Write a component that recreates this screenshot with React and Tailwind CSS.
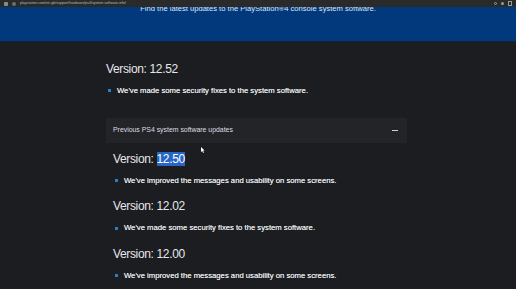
const versions = [
	{ v: "12.50", note: "We've improved the messages and usability on some screens.", selected: true },
	{ v: "12.02", note: "We've made some security fixes to the system software." },
	{ v: "12.00", note: "We've improved the messages and usability on some screens." },
];

const Bullet = ({ children }) => (
	<div className="flex items-center gap-[6px] text-[7.7px] leading-none text-[#e2e3e6] [text-shadow:0_0_0.3px_#e2e3e6]">
		<span className="w-[3px] h-[3px] bg-[#2f7dc4] shrink-0" />
		<span>{children}</span>
	</div>
);

const App = () => {
	return (
		<div
			className="w-[516px] h-[289px] bg-[#1c1d20] overflow-hidden relative"
			style={{ fontFamily: '"Liberation Sans", Arial, sans-serif' }}
		>
			{/* browser bar */}
			<div className="h-[7px] bg-[#2a2a2b] flex items-center px-[4px] gap-[4px]">
				<span className="w-[4px] h-[4px] bg-[#8a8a8a] rounded-[1px]" />
				<span className="w-[4px] h-[4px] bg-[#6d6d6d] rounded-full" />
				<span className="text-[3.6px] leading-none text-[#b9b9b9] whitespace-nowrap">
					playstation.com/en-gb/support/hardware/ps4/system-software-info/
				</span>
				<div className="ml-auto flex items-center gap-[4px]">
					<span className="w-[3px] h-[3px] rounded-full border border-[#9a9a9a]" />
					<span className="w-[3px] h-[3px] rounded-full bg-[#9a9a9a]" />
					<span className="w-[4px] h-[5px] border border-[#9a9a9a]" />
				</div>
			</div>

			{/* hero band */}
			<div className="h-[35px] bg-[#02387c] overflow-hidden border-b border-[#11223f]">
				<p className="text-center text-[7.6px] leading-none text-[#dfe6f2] -mt-[2px]">
					Find the latest updates to the PlayStation®4 console system software.
				</p>
			</div>

			{/* content */}
			<div className="ml-[106px] w-[301px] pt-[21px]">
				<h2 className="text-[12px] leading-none text-[#e6e7ea] font-light tracking-[-0.35px]">
					Version: 12.52
				</h2>
				<div className="mt-[12px] ml-[2px]">
					<Bullet>We've made some security fixes to the system software.</Bullet>
				</div>

				<div className="mt-[23px] h-[25px] bg-[#232428] flex items-center justify-between pl-[7px] pr-[9px]">
					<span className="text-[6.9px] text-[#dcdde0] leading-none">Previous PS4 system software updates</span>
					<span className="w-[6px] h-[1px] bg-[#cfd0d3]" />
				</div>

				<div className="pl-[7px] pt-[10px] flex flex-col">
					{versions.map((item, i) => (
						<div key={item.v} className={i > 0 ? "mt-[16px]" : ""}>
							<h3 className="text-[12px] leading-none text-[#e6e7ea] font-light tracking-[-0.35px]">
								Version:{" "}
								<span className={item.selected ? "bg-[#2766c4] text-white" : ""}>{item.v}</span>
							</h3>
							<div className="mt-[12px] ml-[2px]">
								<Bullet>{item.note}</Bullet>
							</div>
						</div>
					))}
				</div>
			</div>

			{/* mouse pointer */}
			<svg className="absolute left-[201px] top-[147px]" width="4" height="6" viewBox="0 0 4 6">
				<path d="M0 0 L0 5 L1.2 4 L2.2 6 L3 5.6 L2 3.6 L3.6 3.6 Z" fill="#ffffff" />
			</svg>
		</div>
	);
};

export default App;
